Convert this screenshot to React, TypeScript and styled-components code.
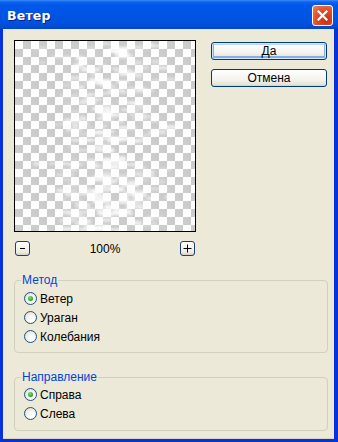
import React from "react";
import styled, { createGlobalStyle } from "styled-components";

const GlobalStyle = createGlobalStyle`
  html, body {
    margin: 0;
    padding: 0;
    background: #ece9d8;
  }
  body {
    font-family: "Liberation Sans", Arial, sans-serif;
    font-size: 12px;
    color: #000;
  }
`;

const Window = styled.div`
  width: 338px;
  height: 442px;
  display: flex;
  flex-direction: column;
  background: #0831d9;
  box-sizing: border-box;
`;

const TitleBar = styled.div`
  height: 29px;
  flex: none;
  display: flex;
  align-items: center;
  justify-content: space-between;
  padding: 0 5px 0 7px;
  background: linear-gradient(
    to bottom,
    #3d8cf7 0px,
    #0b63ee 2px,
    #0058ea 5px,
    #0055e5 12px,
    #0053e1 20px,
    #004fd9 25px,
    #0045c8 29px
  );
`;

const Title = styled.span`
  font-family: "DejaVu Sans", Verdana, sans-serif;
  font-weight: bold;
  font-size: 12.5px;
  letter-spacing: 0.2px;
  color: #fff;
  text-shadow: 1px 1px 0 #0a1e8c;
  margin-top: 2px;
`;

const CloseButton = styled.div`
  width: 19px;
  height: 19px;
  margin-top: 2px;
  border: 1px solid #fff;
  border-radius: 3px;
  background: radial-gradient(circle at 70% 75%, #c83010 0%, #e2512a 55%, #f08060 100%);
  display: flex;
  align-items: center;
  justify-content: center;
`;

const Client = styled.div`
  flex: 1;
  margin: 0 4px 4px 3px;
  background: #ece9d8;
  padding: 11px 6px 8px 11px;
  display: flex;
  flex-direction: column;
  box-shadow: inset 0 -1px 0 #d8d4c4;
`;

const TopRow = styled.div`
  display: flex;
  gap: 15px;
`;

const PreviewColumn = styled.div`
  width: 182px;
  display: flex;
  flex-direction: column;
`;

const Preview = styled.div`
  width: 180px;
  height: 190px;
  border: 1px solid #000;
  background-color: #fff;
  background-image: conic-gradient(#cccccc 25%, #ffffff 0 50%, #cccccc 0 75%, #ffffff 0);
  background-size: 16px 16px;
  overflow: hidden;
  svg {
    display: block;
  }
`;

const ZoomRow = styled.div`
  display: flex;
  align-items: center;
  justify-content: space-between;
  margin-top: 9px;
  padding: 0 1px;
  height: 15px;
`;

const ZoomButton = styled.div`
  width: 13px;
  height: 13px;
  border: 1px solid #1c3f7a;
  border-radius: 3px;
  background: linear-gradient(to bottom, #ffffff, #eceae0 80%, #d6d0c4);
  display: flex;
  align-items: center;
  justify-content: center;
`;

const ZoomLabel = styled.span`
  font-size: 12px;
`;

const ButtonColumn = styled.div`
  display: flex;
  flex-direction: column;
  gap: 9px;
  margin-top: 2px;
`;

const Button = styled.div<{ $default?: boolean }>`
  width: 114px;
  height: 16px;
  border: 1px solid #003c74;
  border-radius: 3px;
  background: linear-gradient(to bottom, #ffffff 0%, #f4f3ee 60%, #e6e3d6 90%, #d6d0c5 100%);
  display: flex;
  align-items: center;
  justify-content: center;
  font-size: 12px;
  box-shadow: ${(p) =>
    p.$default
      ? "inset 0 0 0 1px #cee7ff, inset 0 -1px 0 2px #89ade4, inset 0 1px 0 1px #bcd4f6"
      : "none"};
`;

const Group = styled.fieldset<{ $top: number; $pt: number; $pb: number }>`
  margin: ${(p) => p.$top}px 0 0 0;
  width: 314px;
  box-sizing: border-box;
  border: 1px solid #d0d0bf;
  border-radius: 4px;
  padding: ${(p) => p.$pt}px 6px ${(p) => p.$pb}px 9px;
`;

const Legend = styled.legend`
  color: #0046d5;
  font-size: 12px;
  line-height: 14px;
  padding: 0 1px;
  margin-left: -3px;
`;

const RadioRow = styled.div`
  height: 19px;
  display: flex;
  align-items: center;
  gap: 3px;
`;

const RadioCircle = styled.span<{ $checked?: boolean }>`
  width: 11px;
  height: 11px;
  border: 1px solid #1c5180;
  border-radius: 50%;
  background: radial-gradient(circle at 65% 70%, #ffffff 20%, #e8e6dc 70%, #d4d1c6 100%);
  display: flex;
  align-items: center;
  justify-content: center;
  &::after {
    content: "";
    display: ${(p) => (p.$checked ? "block" : "none")};
    width: 5px;
    height: 5px;
    border-radius: 50%;
    background: radial-gradient(circle at 40% 35%, #7be27b, #21a121 70%, #1a7e1a);
  }
`;

const RadioLabel = styled.span`
  font-size: 12px;
`;

// простая псевдослучайная последовательность, чтобы "ветер" был одинаковым
function rng(seed: number) {
  let s = seed;
  return () => {
    s = (s * 16807) % 2147483647;
    return (s - 1) / 2147483646;
  };
}

const streaks = (() => {
  const r = rng(7);
  const out: { x: number; y: number; w: number; h: number; o: number }[] = [];
  for (let i = 0; i < 260; i++) {
    const g = (r() + r() + r() - 1.5) * 2;
    const x = 92 + g * 26;
    const y = r() * 192;
    const core = Math.abs(x - 95) < 18;
    out.push({
      x,
      y,
      w: 5 + r() * 14,
      h: 1.5 + r() * 3,
      o: (core ? 0.35 : 0.2) + r() * 0.45,
    });
  }
  return out;
})();

const WindPreview = () => (
  <svg width="180" height="190" viewBox="0 0 180 190">
    <defs>
      <filter id="blur" x="-20%" y="-20%" width="140%" height="140%">
        <feGaussianBlur stdDeviation="1.1 0.8" />
      </filter>
    </defs>
    <g filter="url(#blur)">
      {streaks.map((s, i) => (
        <rect key={i} x={s.x - s.w / 2} y={s.y} width={s.w} height={s.h} fill="#fff" opacity={s.o} />
      ))}
    </g>
  </svg>
);

const Radio = ({ label, checked }: { label: string; checked?: boolean }) => (
  <RadioRow>
    <RadioCircle $checked={checked} />
    <RadioLabel>{label}</RadioLabel>
  </RadioRow>
);

const App: React.FC = () => {
  return (
    <>
      <GlobalStyle />
      <Window>
        <TitleBar>
          <Title>Ветер</Title>
          <CloseButton>
            <svg width="11" height="11" viewBox="0 0 11 11">
              <path d="M1.5 1.5 L9.5 9.5 M9.5 1.5 L1.5 9.5" stroke="#fff" strokeWidth="2.2" strokeLinecap="square" />
            </svg>
          </CloseButton>
        </TitleBar>
        <Client>
          <TopRow>
            <PreviewColumn>
              <Preview>
                <WindPreview />
              </Preview>
              <ZoomRow>
                <ZoomButton>
                  <svg width="7" height="7" viewBox="0 0 7 7">
                    <path d="M1 3.5 H6" stroke="#000" strokeWidth="1" />
                  </svg>
                </ZoomButton>
                <ZoomLabel>100%</ZoomLabel>
                <ZoomButton>
                  <svg width="9" height="9" viewBox="0 0 9 9">
                    <path d="M0.5 4.5 H8.5 M4.5 0.5 V8.5" stroke="#000" strokeWidth="1" />
                  </svg>
                </ZoomButton>
              </ZoomRow>
            </PreviewColumn>
            <ButtonColumn>
              <Button $default>Да</Button>
              <Button>Отмена</Button>
            </ButtonColumn>
          </TopRow>
          <Group $top={17} $pt={2} $pb={6}>
            <Legend>Метод</Legend>
            <Radio label="Ветер" checked />
            <Radio label="Ураган" />
            <Radio label="Колебания" />
          </Group>
          <Group $top={17} $pt={1} $pb={7}>
            <Legend>Направление</Legend>
            <Radio label="Справа" checked />
            <Radio label="Слева" />
          </Group>
        </Client>
      </Window>
    </>
  );
};

export default App;
